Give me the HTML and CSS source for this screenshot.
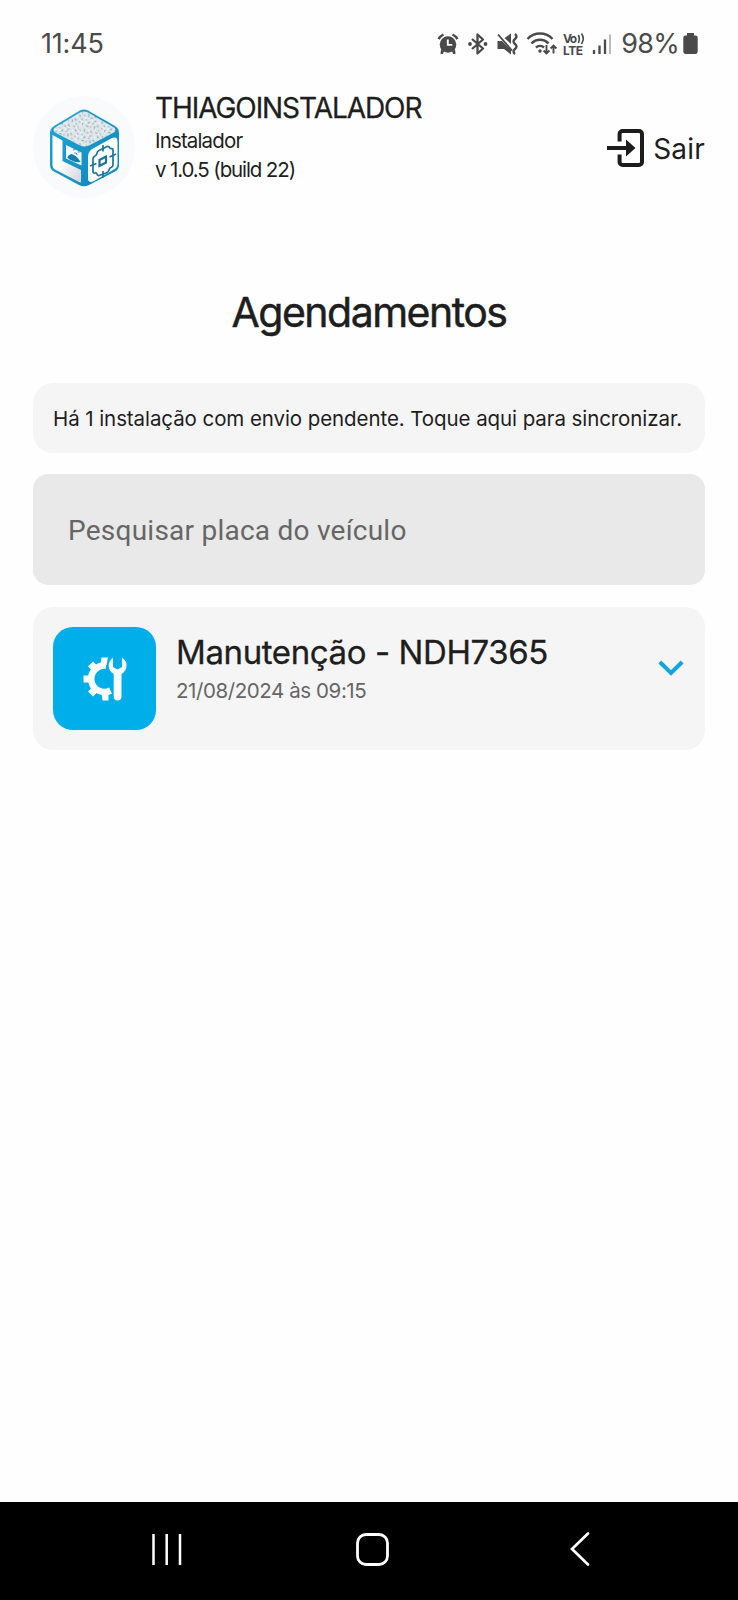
FILE: index.html
```
<!DOCTYPE html>
<html lang="pt-BR">
<head>
<meta charset="utf-8">
<title>Agendamentos</title>
<link rel="stylesheet" href="styles.css">
</head>
<body>
<div class="statusbar">
  <span class="clock">11:45</span>
  <div class="status-icons">
    <svg class="tray" width="172" height="28" viewBox="0 0 172 28">
      <g fill="#4a4a4a" stroke="none">
        <circle cx="10" cy="14.500" r="8.300"/>
        <path d="M3 19l3 2-1 3H2.500zM17 19l-3 2 1 3h2.500z"/>
        <path d="M.5 9A12 12 0 0 1 5.500 4.500M19.500 9A12 12 0 0 0 14.500 4.500" fill="none" stroke="#4a4a4a" stroke-width="2.400"/>
        <path d="M9.800 9.500v5.400h4.500" fill="none" stroke="#fff" stroke-width="1.900"/>
      </g>
      <path d="M34 9l11 9.500-5.500 5V4.500l5.500 5L34 19" fill="none" stroke="#4a4a4a" stroke-width="2.300" stroke-linejoin="round"/>
      <circle cx="32" cy="14" r="1.900" fill="#4a4a4a"/><circle cx="47.500" cy="14" r="1.900" fill="#4a4a4a"/>
      <path d="M59.500 11H64l9 9v4.500L66 19h-6.500zM66.500 8l6.500-4.500v10.500z" fill="#4a4a4a"/>
      <path d="M60 4.500l14 16" fill="none" stroke="#4a4a4a" stroke-width="1.800"/>
      <path d="M77 4q3 2.500 0 5t0 5 0 5 0 5" fill="none" stroke="#4a4a4a" stroke-width="2.400"/>
      <g fill="none" stroke="#4a4a4a" stroke-width="2.500">
        <path d="M89.500 9a17 17 0 0 1 25 0M93.500 13.500a11.500 11.500 0 0 1 17 0M98 17.500a6 6 0 0 1 8 0"/>
        <path d="M108.500 15v8.500M105.600 20.500l2.900 3 2.900-3M115.500 23.500V15M112.600 18.500l2.900-3 2.900 3" stroke-width="1.900"/>
      </g>
      <circle cx="102" cy="21" r="1.700" fill="#4a4a4a"/>
      <g class="volte" fill="#4a4a4a"><text x="125" y="13" textLength="14">Vo</text><text x="125" y="25" textLength="20">LTE</text></g>
      <path d="M140.300 5q2 3.500 0 8M143.500 3.500q3.500 5 0 10.500" fill="none" stroke="#4a4a4a" stroke-width="1.600"/>
      <path d="M156 20v4M161.500 15.500V24M167 9.500V24" stroke="#4a4a4a" stroke-width="2.300"/>
      <path d="M172 4.500V24" stroke="#bbb" stroke-width="2"/>
    </svg>
    <span class="battery-level">98%</span>
    <svg width="15" height="22" viewBox="0 0 15 22"><path d="M4 0h7v2.500h1.500a2.200 2.200 0 0 1 2.200 2.200v14A2.500 2.500 0 0 1 12.200 21H2.800A2.500 2.500 0 0 1 .3 18.700v-14a2.200 2.200 0 0 1 2.200-2.200H4z" fill="#4a4a4a"/></svg>
  </div>
</div>
<header class="header">
  <div class="avatar">
    <svg width="102" height="102" viewBox="0 0 102 102">
      <defs>
        <linearGradient id="edge" x1="0" y1="0" x2="1" y2="1"><stop offset="0" stop-color="#22a6d6"/><stop offset="1" stop-color="#0b86ba"/></linearGradient>
        <linearGradient id="panel" x1="0" y1="0" x2="1" y2="1"><stop offset=".4" stop-color="#fff"/><stop offset="1" stop-color="#d5d6dc"/></linearGradient>
        <pattern id="speckle" width="29" height="19" patternUnits="userSpaceOnUse" patternTransform="rotate(17) scale(.8)">
          <rect width="29" height="19" fill="#dfe6e9"/>
          <path d="M1 2h2v1M7 1v2h1M4 6h2v2M10 4l2 1M9 9v2h2M15 2h1v3M19 5h3M24 1v2l2 1M27 7h-2v2M14 8l1 2M19 10v2h-2M23 11h2M1 11v2h2M6 14h2M12 14l-1 3M16 16h3v1M22 15v2M26 14h1v3M3 17l2 1" fill="none" stroke="#6f93a3" stroke-width=".9"/>
          <path d="M5 3h2M12 7h2M21 8h2M8 12h3M20 2h2M1 8h2M14 12h2M24 6h2M9 17h2M20 14h1M27 11h1" stroke="#fff" stroke-width="1.300"/>
        </pattern>
      </defs>
      <path d="M47 14.500Q51 12.500 55 14.500L82 30Q86 32.500 86 37V69Q86 73 82 75.500L56 89Q51 91.500 46 89L21 75.500Q17 73 17 69V37Q17 32.500 21 30Z" fill="url(#edge)"/>
      <path d="M47 16.500Q51 14.500 55 16.500L81 31.500Q84 34 81 36.500L56 49.500Q51.500 51.500 47 49.500L22 36.500Q19 34 22 31.500Z" fill="url(#speckle)"/>
      <path d="M19.500 39L29.500 44.500V65L48 74V85.500Q48 87 46 86L22 73.500Q19.500 72 19.500 69Z" fill="url(#panel)"/>
      <path d="M33 49L48.500 56.500V69.500L33 62.500Z" fill="#f3f9fb"/>
      <path d="M34.500 62q0-3 4-4 5 1 9 8-7 1-13-4z" fill="#137fae"/>
      <path d="M40 54q6-2 6 3M41 57q3-1 3 2" fill="none" stroke="#4b9dbd" stroke-width="1"/>
      <path d="M55 61Q55 55 60 52.500L78 42.500Q84.500 39.500 84.500 45.500V68Q84.500 71.500 81 73.500L61 85Q55 88 55 82Z" fill="#fff"/>
      <g fill="none" stroke="#1a759c" stroke-width="1.700">
        <path d="M60 63Q60 61 62 60Q64 59 64 57Q64 55.500 66 54.500L74 50.500Q76 50 76.500 51.500Q77 53 79 52.500Q80 52.500 80 54V69Q80 71 78 71.500Q76.500 72 76 74Q75.500 76 73 77L66 79.500Q64.500 80 64 78Q63.500 76.500 62 77Q60 77.500 60 75.500Z"/>
        <path d="M66.500 64L73 60.500V66.500L66.500 70Z" stroke-width="2.200"/>
        <path d="M70 49v6.500M70 75v6.500M57 70l6.500-2.500M76.500 61l6.500-3"/>
      </g>
    </svg>
  </div>
  <div class="user">
    <div class="user-name">THIAGOINSTALADOR</div>
    <div class="user-info">Instalador</div>
    <div class="user-info version">v 1.0.5 (build 22)</div>
  </div>
  <div class="logout">
    <svg width="38" height="38" viewBox="0 0 38 38"><path d="M12.600 12.500V5a3 3 0 0 1 3-3H32a3 3 0 0 1 3 3v28a3 3 0 0 1-3 3H15.600a3 3 0 0 1-3-3v-7.500" fill="none" stroke="#1c1c1c" stroke-width="4"/><path d="M0 17h19v-6.500l9.500 8.500-9.500 8.500V21H0z" fill="#1c1c1c"/></svg>
    <span class="logout-label">Sair</span>
  </div>
</header>
<main class="content">
  <h1 class="title">Agendamentos</h1>
  <div class="notice">Há 1 instalação com envio pendente. Toque aqui para sincronizar.</div>
  <div class="search">Pesquisar placa do veículo</div>
  <section class="card">
    <div class="card-icon">
      <svg width="44" height="44" viewBox="0 0 44 44">
        <path d="M23 8.700A13.200 13.200 0 1 0 27.500 33.500" fill="none" stroke="#fff" stroke-width="6.500"/>
        <path d="M18.500.5H25L23.500 8h-6zM18.500 35.500h7v8h-6zM.5 18.500H7v7H.5zM5 9.500l5-5 5 5-5 5zM5 34.500l5 5 5-5-5-5z" fill="#fff"/>
        <path d="M30 .5v9.500l4.500 2.500L39 10V.5q5 3.500 4.500 9-.7 4.500-5 7.500v22.500a3.900 3.900 0 0 1-7.800 0V17q-4.500-3-5-7.500Q25.500 4 30 .5z" fill="#fff"/>
      </svg>
    </div>
    <div class="card-text">
      <div class="card-title">Manutenção - NDH7365</div>
      <div class="card-date">21/08/2024 às 09:15</div>
    </div>
    <svg class="chevron" width="26" height="17" viewBox="0 0 26 17"><path d="M1.800 2L13 13l11.200-11" fill="none" stroke="#12a5de" stroke-width="4"/></svg>
  </section>
</main>
<nav class="navbar">
  <svg width="30" height="33" viewBox="0 0 30 33"><path d="M1.500 1v31M14.700 1v31M28 1v31" stroke="#fff" stroke-width="2.500"/></svg>
  <svg class="home" width="33" height="33" viewBox="0 0 33 33"><rect x="1.500" y="1.500" width="30" height="30" rx="8.500" fill="none" stroke="#fff" stroke-width="2.800"/></svg>
  <svg width="20" height="34" viewBox="0 0 20 34"><path d="M18 1.500L2 17l16 15.500" fill="none" stroke="#fff" stroke-width="2.700" stroke-linecap="round"/></svg>
</nav>
</body>
</html>
```
FILE: styles.css
```
* { box-sizing: border-box; }
body {
  margin: 0; width: 738px; height: 1600px; overflow: hidden;
  display: flex; flex-direction: column;
  background: #fefefe; color: #1e1e1e;
  font-family: Inter, "Liberation Sans", sans-serif;
  white-space: nowrap;
}
svg { display: block; flex: none; }

.statusbar { height: 88px; padding: 0 40px 1px 41px; display: flex; justify-content: space-between; align-items: center; color: #4a4a4a; }
.clock, .battery-level { font-size: 27px; font-weight: 400; letter-spacing: -0.2px; }
.status-icons { display: flex; align-items: center; }
.tray { overflow: visible; }
.volte { font-size: 12px; font-weight: 700; }
.battery-level { margin: 0 4px 0 11px; letter-spacing: -0.7px; }

.header { height: 119px; padding: 8px 33px 0; display: flex; }
.avatar { width: 102px; height: 102px; border-radius: 50%; background: #f8fafc; }
.user { margin-left: 20px; flex: 1; }
.user-name { font-size: 28px; line-height: 24px; letter-spacing: -1.07px; -webkit-text-stroke: 0.3px; }
.user-info { font-size: 20.5px; line-height: 29px; letter-spacing: -0.85px; padding-top: 6px; height: 29px; }
.version { letter-spacing: -1.12px; }
.logout { display: flex; height: 104px; align-items: center; gap: 8px; font-size: 28px; }
.logout-label { padding-top: 2px; letter-spacing: 0.2px; }

.content { flex: 1; padding: 0 33px; }
.title { margin: 80px 0 0; text-align: center; font-size: 41px; font-weight: 400; line-height: 50px; letter-spacing: -1.5px; -webkit-text-stroke: 0.5px; }
.notice { margin-top: 46px; height: 70px; border-radius: 20px; background: #f5f5f5; padding-left: 20px; line-height: 72px; font-size: 20.5px; letter-spacing: -0.08px; }
.search { margin-top: 21px; height: 111px; border-radius: 15px; background: #e9e9e9; padding-left: 35px; line-height: 114px; font-family: Roboto, sans-serif; font-size: 28px; letter-spacing: 0.24px; color: #666; }
.card { margin-top: 22px; height: 143px; border-radius: 20px; background: #f5f5f5; padding: 20px; display: flex; }
.card-icon { width: 103px; height: 103px; border-radius: 20px; background: #00aeea; display: flex; align-items: center; justify-content: center; }
.card-text { margin-left: 20px; flex: 1; }
.card-title { font-size: 33px; line-height: 51px; letter-spacing: -0.4px; -webkit-text-stroke: 0.3px; }
.card-date { font-size: 20.5px; line-height: 26px; letter-spacing: -0.42px; color: #666; }
.chevron { margin: 33px 1px 0 0; }

.navbar { height: 98px; background: #000; padding: 0 148px 4px 152px; display: flex; align-items: center; justify-content: space-between; }
.home { margin-right: 7px; }
```
